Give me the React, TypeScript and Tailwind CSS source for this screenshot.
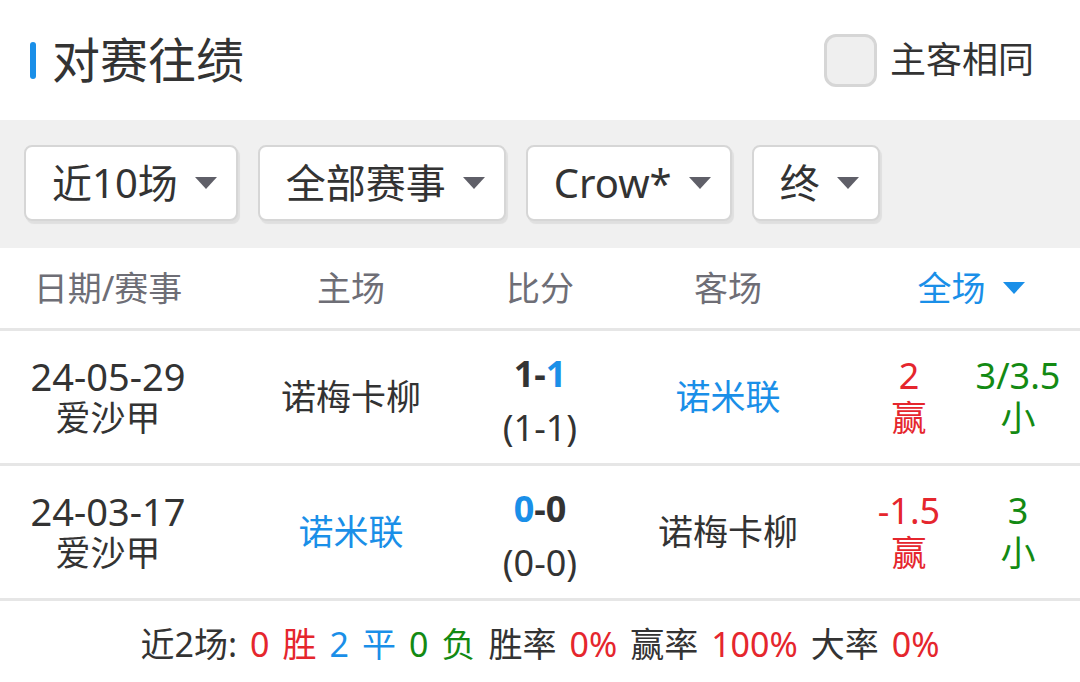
import React from "react";

const BLUE = "text-[#1a8fe8]";
const RED = "text-[#e5262d]";
const GREEN = "text-[#138a13]";

type Match = {
  date: string;
  league: string;
  home: string;
  homeBlue: boolean;
  away: string;
  awayBlue: boolean;
  score: [string, string];
  blueSide: "home" | "away";
  half: string;
  handicap: string;
  hResult: string;
  total: string;
  tResult: string;
};

const matches: Match[] = [
  {
    date: "24-05-29",
    league: "爱沙甲",
    home: "诺梅卡柳",
    homeBlue: false,
    away: "诺米联",
    awayBlue: true,
    score: ["1", "1"],
    blueSide: "away",
    half: "(1-1)",
    handicap: "2",
    hResult: "赢",
    total: "3/3.5",
    tResult: "小",
  },
  {
    date: "24-03-17",
    league: "爱沙甲",
    home: "诺米联",
    homeBlue: true,
    away: "诺梅卡柳",
    awayBlue: false,
    score: ["0", "0"],
    blueSide: "home",
    half: "(0-0)",
    handicap: "-1.5",
    hResult: "赢",
    total: "3",
    tResult: "小",
  },
];

// 汇总行：文字 + 颜色
const summary: [string, string][] = [
  ["近2场:", ""],
  ["0", RED],
  ["胜", RED],
  ["2", BLUE],
  ["平", BLUE],
  ["0", GREEN],
  ["负", GREEN],
  ["胜率", ""],
  ["0%", RED],
  ["赢率", ""],
  ["100%", RED],
  ["大率", ""],
  ["0%", RED],
];

function Caret({ className }: { className?: string }) {
  return (
    <svg width="22" height="12" viewBox="0 0 22 12" className={className}>
      <path d="M0 0 L22 0 L11 12 Z" fill="currentColor" />
    </svg>
  );
}

function FilterButton({ label }: { label: string }) {
  return (
    <div className="h-[76px] flex items-center gap-[17px] pl-[26px] pr-[19px] bg-white border-2 border-[#d6d6d6] rounded-[8px] shadow-[2px_3px_1px_rgba(0,0,0,0.07)]">
      <span className="text-[40px] leading-none text-[#333]">{label}</span>
      <Caret className="text-[#5f5f68]" />
    </div>
  );
}

const cols = "grid grid-cols-[216px_270px_108px_268px_94px_124px]";

export default function App() {
  return (
    <div className="w-[1080px] h-[682px] bg-white overflow-hidden flex flex-col font-['Noto_Sans','Noto_Sans_CJK_SC',sans-serif] text-[#333]">
      {/* 标题 */}
      <div className="h-[120px] flex items-center justify-between pl-[30px] pr-[46px]">
        <div className="flex items-center">
          <span className="w-[6px] h-[37px] rounded-full bg-[#1a8fe8]" />
          <h1 className="ml-[16px] text-[48px] leading-none">对赛往绩</h1>
        </div>
        <label className="flex items-center gap-[13px]">
          <span className="w-[53px] h-[53px] rounded-[12px] border-[3px] border-[#d6d6d6] bg-[#efefef]" />
          <span className="text-[36px] leading-none">主客相同</span>
        </label>
      </div>

      {/* 筛选 */}
      <div className="h-[128px] bg-[#f0f0f0] flex items-start gap-[20px] pt-[25px] pl-[24px]">
        <FilterButton label="近10场" />
        <FilterButton label="全部赛事" />
        <FilterButton label="Crow*" />
        <FilterButton label="终" />
      </div>

      {/* 表头 */}
      <div className={`${cols} h-[83px] border-b-[3px] border-[#e6e6e6] text-[34px] text-[#6e6e76] items-center text-center`}>
        <div>日期/赛事</div>
        <div>主场</div>
        <div>比分</div>
        <div>客场</div>
        <div className="col-span-2 flex items-center justify-center gap-[17px] text-[#1a8fe8]">
          <span>全场</span>
          <Caret />
        </div>
      </div>

      {/* 数据行 */}
      {matches.map((m, i) => (
        <div key={i} className={`${cols} h-[135px] border-b-[3px] border-[#e6e6e6] text-[35px] text-center`}>
          <div className="flex flex-col justify-center leading-[42px]">
            <span className="text-[38px]">{m.date}</span>
            <span>{m.league}</span>
          </div>
          <div className={`flex items-center justify-center ${m.homeBlue ? BLUE : ""}`}>{m.home}</div>
          <div className="flex flex-col justify-center pt-[8px] leading-[54px] text-[36px]">
            <span className="font-bold">
              {m.blueSide === "home" ? (
                <>
                  <span className={BLUE}>{m.score[0]}</span>-{m.score[1]}
                </>
              ) : (
                <>
                  {m.score[0]}-<span className={BLUE}>{m.score[1]}</span>
                </>
              )}
            </span>
            <span>{m.half}</span>
          </div>
          <div className={`flex items-center justify-center ${m.awayBlue ? BLUE : ""}`}>{m.away}</div>
          <div className={`flex flex-col justify-center leading-[42px] ${RED}`}>
            <span className="text-[36px]">{m.handicap}</span>
            <span>{m.hResult}</span>
          </div>
          <div className={`flex flex-col justify-center leading-[42px] ${GREEN}`}>
            <span className="text-[36px]">{m.total}</span>
            <span>{m.tResult}</span>
          </div>
        </div>
      ))}

      {/* 汇总 */}
      <div className="flex-1 flex items-center justify-center gap-[13px] pt-[4px] text-[34px] leading-none">
        {summary.map(([t, c], i) => (
          <span key={i} className={c}>
            {t}
          </span>
        ))}
      </div>
    </div>
  );
}
